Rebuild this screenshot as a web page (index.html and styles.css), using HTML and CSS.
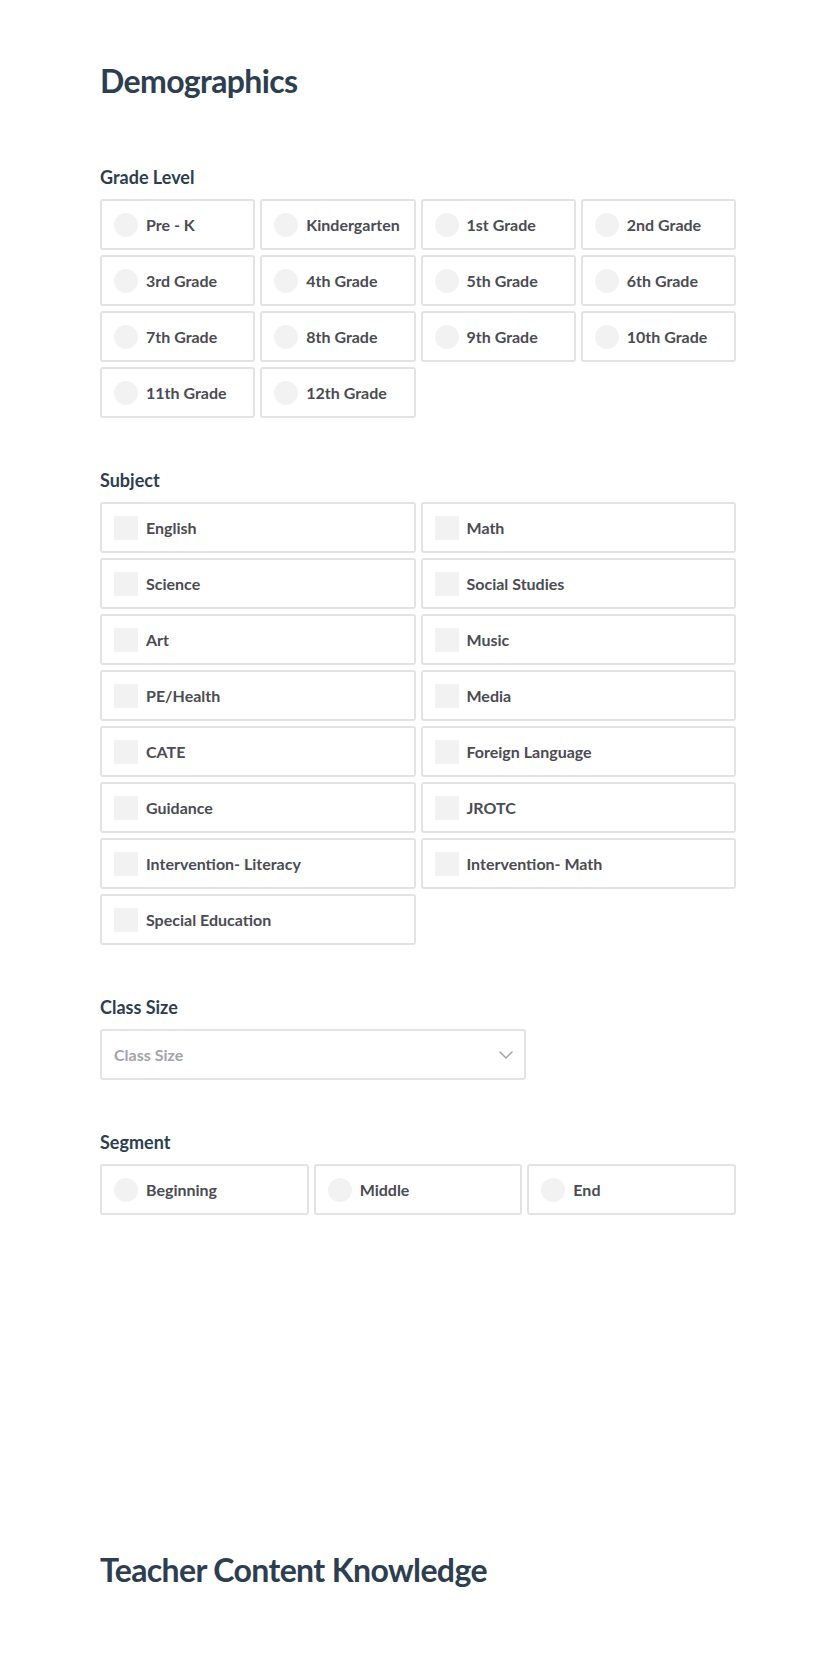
FILE: index.html
```html
<!DOCTYPE html>
<html lang="en">
<head>
<meta charset="utf-8">
<title>Demographics</title>
<link rel="stylesheet" href="styles.css">
</head>
<body>
<main class="page">
  <section class="section">
    <h1 class="title">Demographics</h1>

    <div class="field">
      <h2 class="label">Grade Level</h2>
      <div class="options cols-4">
        <label class="option"><span class="radio"></span><span class="text">Pre - K</span></label>
        <label class="option"><span class="radio"></span><span class="text">Kindergarten</span></label>
        <label class="option"><span class="radio"></span><span class="text">1st Grade</span></label>
        <label class="option"><span class="radio"></span><span class="text">2nd Grade</span></label>
        <label class="option"><span class="radio"></span><span class="text">3rd Grade</span></label>
        <label class="option"><span class="radio"></span><span class="text">4th Grade</span></label>
        <label class="option"><span class="radio"></span><span class="text">5th Grade</span></label>
        <label class="option"><span class="radio"></span><span class="text">6th Grade</span></label>
        <label class="option"><span class="radio"></span><span class="text">7th Grade</span></label>
        <label class="option"><span class="radio"></span><span class="text">8th Grade</span></label>
        <label class="option"><span class="radio"></span><span class="text">9th Grade</span></label>
        <label class="option"><span class="radio"></span><span class="text">10th Grade</span></label>
        <label class="option"><span class="radio"></span><span class="text">11th Grade</span></label>
        <label class="option"><span class="radio"></span><span class="text">12th Grade</span></label>
      </div>
    </div>

    <div class="field">
      <h2 class="label">Subject</h2>
      <div class="options cols-2">
        <label class="option"><span class="check"></span><span class="text">English</span></label>
        <label class="option"><span class="check"></span><span class="text">Math</span></label>
        <label class="option"><span class="check"></span><span class="text">Science</span></label>
        <label class="option"><span class="check"></span><span class="text">Social Studies</span></label>
        <label class="option"><span class="check"></span><span class="text">Art</span></label>
        <label class="option"><span class="check"></span><span class="text">Music</span></label>
        <label class="option"><span class="check"></span><span class="text">PE/Health</span></label>
        <label class="option"><span class="check"></span><span class="text">Media</span></label>
        <label class="option"><span class="check"></span><span class="text">CATE</span></label>
        <label class="option"><span class="check"></span><span class="text">Foreign Language</span></label>
        <label class="option"><span class="check"></span><span class="text">Guidance</span></label>
        <label class="option"><span class="check"></span><span class="text">JROTC</span></label>
        <label class="option"><span class="check"></span><span class="text">Intervention- Literacy</span></label>
        <label class="option"><span class="check"></span><span class="text">Intervention- Math</span></label>
        <label class="option"><span class="check"></span><span class="text">Special Education</span></label>
      </div>
    </div>

    <div class="field">
      <h2 class="label">Class Size</h2>
      <div class="select">
        <span class="placeholder">Class Size</span>
        <svg class="chevron" width="14" height="8" viewBox="0 0 14 8" aria-hidden="true">
          <path d="M1 1 L7 7 L13 1" fill="none" stroke="#a3a3a8" stroke-width="1.5" stroke-linecap="round" stroke-linejoin="round"/>
        </svg>
      </div>
    </div>

    <div class="field">
      <h2 class="label">Segment</h2>
      <div class="options cols-3">
        <label class="option"><span class="radio"></span><span class="text">Beginning</span></label>
        <label class="option"><span class="radio"></span><span class="text">Middle</span></label>
        <label class="option"><span class="radio"></span><span class="text">End</span></label>
      </div>
    </div>
  </section>

  <section class="section next">
    <h1 class="title">Teacher Content Knowledge</h1>
  </section>
</main>
</body>
</html>
```

FILE: styles.css
```css
html, body {
  margin: 0;
  padding: 0;
  background: #ffffff;
}

body {
  font-family: Lato, "Liberation Sans", Arial, sans-serif;
  color: #2c3e50;
}

.page {
  padding: 62px 104px 0 100px;
}

.title {
  margin: 0;
  font-size: 32px;
  line-height: 38px;
  font-weight: 700;
  color: #2c3e50;
  letter-spacing: -0.62px;
}

.field {
  margin-top: 51px;
}

.section > .field:first-of-type {
  margin-top: 66px;
}

.label {
  margin: 0 0 11px 0;
  font-size: 18px;
  line-height: 22px;
  font-weight: 700;
  color: #2c3e50;
}

.options {
  display: grid;
  column-gap: 5px;
  row-gap: 5px;
}

.cols-4 { grid-template-columns: repeat(4, 1fr); }
.cols-3 { grid-template-columns: repeat(3, 1fr); }
.cols-2 { grid-template-columns: repeat(2, 1fr); }

.option {
  display: flex;
  align-items: center;
  height: 51px;
  box-sizing: border-box;
  border: 2px solid #e3e3e3;
  border-radius: 3px;
  padding-left: 12px;
  background: #ffffff;
}

.radio {
  flex: none;
  width: 24px;
  height: 24px;
  border-radius: 50%;
  background: #f2f2f2;
  margin-right: 8px;
}

.check {
  flex: none;
  width: 24px;
  height: 24px;
  background: #f2f2f2;
  margin-right: 8px;
}

.text {
  font-size: 16px;
  font-weight: 700;
  color: #4b4b53;
  white-space: nowrap;
}

.select {
  display: flex;
  align-items: center;
  justify-content: space-between;
  width: 426px;
  height: 51px;
  box-sizing: border-box;
  border: 2px solid #e3e3e3;
  border-radius: 3px;
  padding: 0 11px 0 12px;
}

.placeholder {
  font-size: 16px;
  font-weight: 700;
  color: #a3a3ab;
}

.chevron {
  display: block;
}

.next {
  margin-top: 336px;
  padding-bottom: 80px;
}
```
